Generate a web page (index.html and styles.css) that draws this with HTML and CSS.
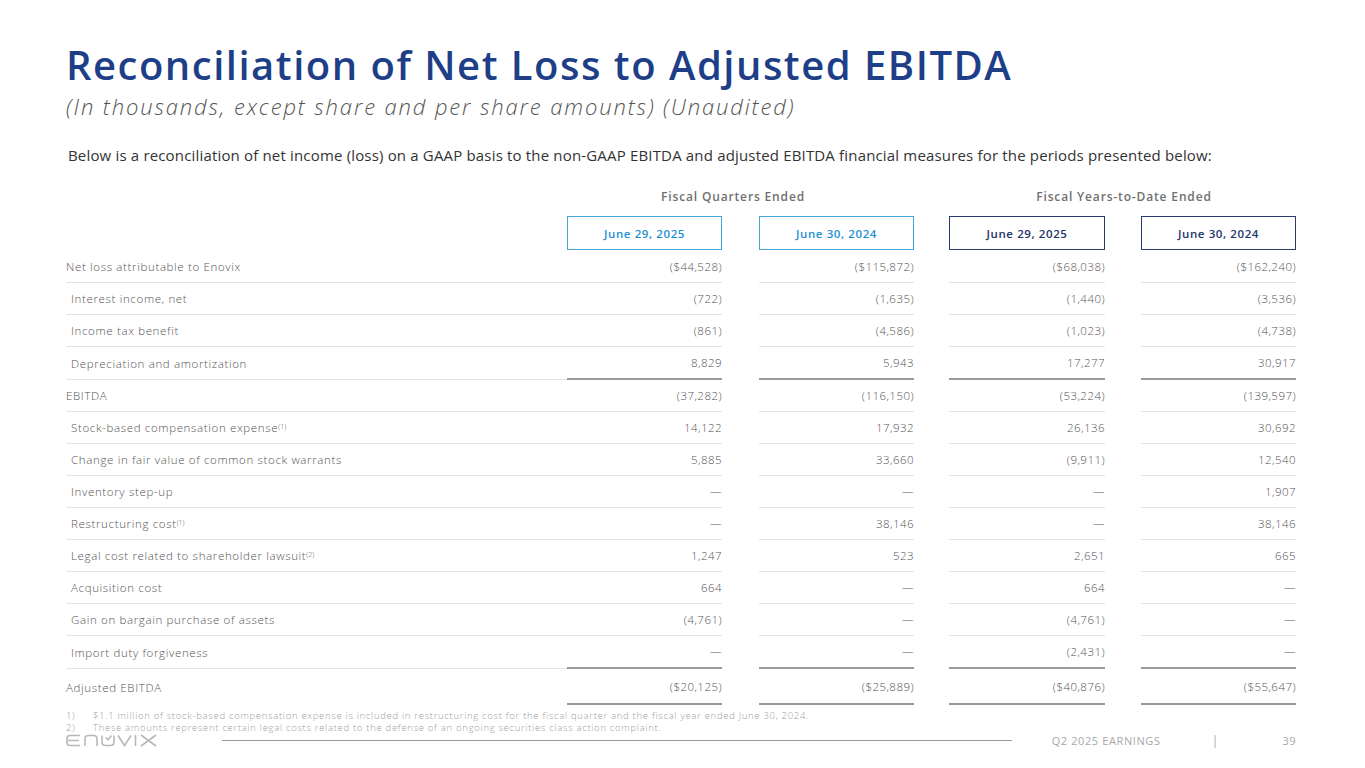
FILE: index.html
```html
<!DOCTYPE html>
<html lang="en">
<head>
<meta charset="utf-8">
<title>Reconciliation of Net Loss to Adjusted EBITDA</title>
<link rel="stylesheet" href="styles.css">
</head>
<body>
<div class="slide">
  <h1 class="title">Reconciliation of Net Loss to Adjusted EBITDA</h1>
  <p class="subtitle">(In thousands, except share and per share amounts) (Unaudited)</p>
  <p class="intro">Below is a reconciliation of net income (loss) on a GAAP basis to the non-GAAP EBITDA and adjusted EBITDA financial measures for the periods presented below:</p>

  <div class="table">
    <div class="group-row">
      <div class="group g-q">Fiscal Quarters Ended</div>
      <div class="group g-y">Fiscal Years-to-Date Ended</div>
    </div>
    <div class="row head-row">
      <div class="lbl"></div>
      <div class="hd hd-light">June 29, 2025</div>
      <div class="hd hd-light">June 30, 2024</div>
      <div class="hd hd-dark">June 29, 2025</div>
      <div class="hd hd-dark">June 30, 2024</div>
    </div>

    <div class="row"><div class="lbl">Net loss attributable to Enovix</div><div class="v">($44,528)</div><div class="v">($115,872)</div><div class="v">($68,038)</div><div class="v">($162,240)</div></div>
    <div class="row"><div class="lbl ind">Interest income, net</div><div class="v">(722)</div><div class="v">(1,635)</div><div class="v">(1,440)</div><div class="v">(3,536)</div></div>
    <div class="row"><div class="lbl ind">Income tax benefit</div><div class="v">(861)</div><div class="v">(4,586)</div><div class="v">(1,023)</div><div class="v">(4,738)</div></div>
    <div class="row total"><div class="lbl ind">Depreciation and amortization</div><div class="v">8,829</div><div class="v">5,943</div><div class="v">17,277</div><div class="v">30,917</div></div>
    <div class="row"><div class="lbl">EBITDA</div><div class="v">(37,282)</div><div class="v">(116,150)</div><div class="v">(53,224)</div><div class="v">(139,597)</div></div>
    <div class="row"><div class="lbl ind">Stock-based compensation expense<sup>(1)</sup></div><div class="v">14,122</div><div class="v">17,932</div><div class="v">26,136</div><div class="v">30,692</div></div>
    <div class="row"><div class="lbl ind">Change in fair value of common stock warrants</div><div class="v">5,885</div><div class="v">33,660</div><div class="v">(9,911)</div><div class="v">12,540</div></div>
    <div class="row"><div class="lbl ind">Inventory step-up</div><div class="v">—</div><div class="v">—</div><div class="v">—</div><div class="v">1,907</div></div>
    <div class="row"><div class="lbl ind">Restructuring cost<sup>(1)</sup></div><div class="v">—</div><div class="v">38,146</div><div class="v">—</div><div class="v">38,146</div></div>
    <div class="row"><div class="lbl ind">Legal cost related to shareholder lawsuit<sup>(2)</sup></div><div class="v">1,247</div><div class="v">523</div><div class="v">2,651</div><div class="v">665</div></div>
    <div class="row"><div class="lbl ind">Acquisition cost</div><div class="v">664</div><div class="v">—</div><div class="v">664</div><div class="v">—</div></div>
    <div class="row"><div class="lbl ind">Gain on bargain purchase of assets</div><div class="v">(4,761)</div><div class="v">—</div><div class="v">(4,761)</div><div class="v">—</div></div>
    <div class="row total"><div class="lbl ind">Import duty forgiveness</div><div class="v">—</div><div class="v">—</div><div class="v">(2,431)</div><div class="v">—</div></div>
    <div class="row final"><div class="lbl">Adjusted EBITDA</div><div class="v">($20,125)</div><div class="v">($25,889)</div><div class="v">($40,876)</div><div class="v">($55,647)</div></div>
  </div>

  <ol class="notes">
    <li><span class="num">1)</span>$1.1 million of stock-based compensation expense is included in restructuring cost for the fiscal quarter and the fiscal year ended June 30, 2024.</li>
    <li><span class="num">2)</span>These amounts represent certain legal costs related to the defense of an ongoing securities class action complaint.</li>
  </ol>

  <footer class="footer">
    <svg class="logo" width="92" height="13" viewBox="0 0 92 13" aria-label="enovix">
      <g fill="none" stroke="#b8b8b8" stroke-width="1.6">
        <path d="M14 1.5 H4 Q1 1.5 1 4.5 V8.5 Q1 11.5 4 11.5 H14 M1.5 6.5 H13"/>
        <path d="M19 12 V5 Q19 1.5 22.5 1.5 H27.5 Q31 1.5 31 5 V12"/>
        <path d="M36 1.5 V8 Q36 11.5 39.5 11.5 H44.5 Q48 11.5 48 8 V1.5"/>
        <path d="M40 3.5 L42 5.8 L45.5 1.5"/>
        <path d="M52 1.5 L58.5 11.5 L65 1.5"/>
        <path d="M69.5 1 V12"/>
        <path d="M75 1 L90 12 M90 1 L75 12"/>
      </g>
    </svg>
    <div class="rule"></div>
    <div class="earn">Q2 2025 EARNINGS</div>
    <div class="sep">|</div>
    <div class="page">39</div>
  </footer>
</div>
</body>
</html>
```

FILE: styles.css
```css
* { box-sizing: border-box; }
html, body { margin: 0; padding: 0; background: #ffffff; }
body { font-family: "Open Sans", "Liberation Sans", sans-serif; color: #555; }

.slide {
  width: 1365px;
  height: 768px;
  padding: 41px 0 0 66px;
  overflow: hidden;
}

.title {
  margin: 0;
  font-size: 40px;
  line-height: 48px;
  font-weight: 600;
  color: #1e3f88;
  letter-spacing: 1.5px;
}

.subtitle {
  margin: 3px 0 0 0;
  font-size: 22px;
  line-height: 28px;
  font-style: italic;
  font-weight: 300;
  color: #555;
  letter-spacing: 1.88px;
}

.intro {
  margin: 25px 0 0 2px;
  font-size: 15px;
  line-height: 20px;
  color: #333;
  letter-spacing: 0.17px;
}

.table {
  margin-top: 24px;
  width: 1230px;
}

.group-row {
  display: grid;
  grid-template-columns: 501px 348px 382px;
  height: 27px;
}
.group {
  font-size: 12px;
  font-weight: 600;
  color: #707070;
  text-align: center;
  line-height: 16px;
  letter-spacing: 0.85px;
}
.g-q { grid-column: 2; padding-right: 16px; }
.g-y { grid-column: 3; padding-left: 36px; }

.row {
  display: grid;
  grid-template-columns: 501px 155px 192px 191px 191px;
  height: 32px;
}
.row > div {
  border-bottom: 1px solid #e3e3e3;
  display: flex;
  align-items: center;
  font-size: 11.5px;
  font-weight: 300;
  color: #555;
  letter-spacing: 0.45px;
}
.row > .lbl { letter-spacing: 0.65px; }
.row > div:nth-child(3) { margin-left: 37px; }
.row > div:nth-child(4) { margin-left: 35px; }
.row > div:nth-child(5) { margin-left: 36px; }

.lbl { padding-left: 0; }
.lbl.ind { padding-left: 5px; }
.lbl sup { font-size: 7px; line-height: 0; position: relative; top: -1px; vertical-align: super; letter-spacing: 0; }

.v { justify-content: flex-end; color: #666; padding-right: 0; }

.head-row { height: 35px; }
.head-row > div { border-bottom: none; }
.row > .hd {
  justify-content: center;
  font-weight: 600;
  font-size: 11.5px;
  height: 34px;
  letter-spacing: 0.6px;
}
.row > .hd-light { border: 1px solid #45a6dd; color: #1d8fd1; }
.row > .hd-dark { border: 1px solid #2b3d6e; color: #22346a; }

.row.total { height: 33px; }
.row.total > .v { border-bottom: 2px solid #9a9a9a; }

.row.final { height: 36px; }
.row.final > .lbl { border-bottom: none; }
.row.final > .v { border-bottom: 2px solid #9a9a9a; }

.notes {
  list-style: none;
  margin: 5px 0 0 0;
  padding: 0;
  font-size: 9.5px;
  line-height: 12px;
  color: #a0a0a0;
  font-weight: 300;
  letter-spacing: 0.7px;
}
.notes li { display: flex; }
.notes .num { width: 27px; flex: none; }

.footer {
  display: flex;
  align-items: center;
  height: 14px;
  margin-top: -1px;
  width: 1230px;
}
.logo { flex: none; display: block; }
.rule {
  width: 790px;
  height: 1px;
  background: #9a9a9a;
  margin-left: 64px;
}
.earn {
  margin-left: 40px;
  font-size: 11px;
  color: #a8a8a8;
  letter-spacing: 0.6px;
  width: 160px;
}
.sep { color: #a8a8a8; font-size: 12px; width: 71px; }
.page { font-size: 11px; color: #a8a8a8; letter-spacing: 0.4px; }
```
